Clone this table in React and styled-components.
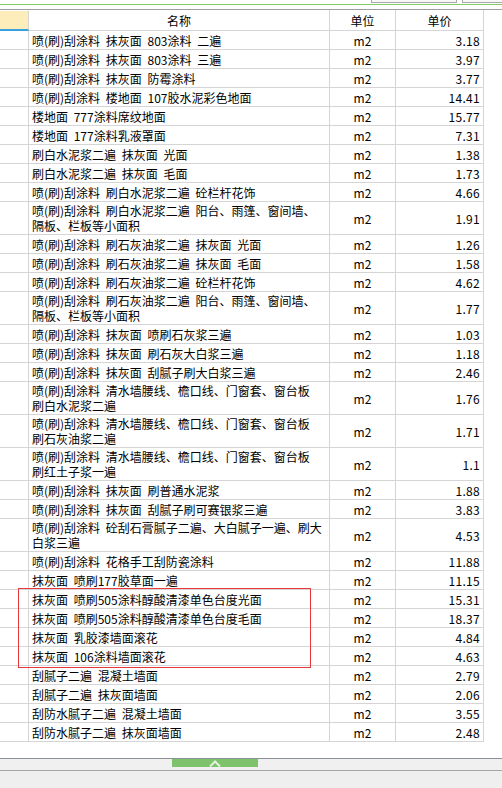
import styled, { createGlobalStyle } from "styled-components";

const GlobalStyle = createGlobalStyle`
  html, body {
    margin: 0;
    padding: 0;
    background: #ffffff;
  }
  body {
    font-family: "Noto Sans CJK SC", "Liberation Sans", sans-serif;
    font-size: 12px;
    color: #000000;
  }
`;

const Page = styled.div`
  height: 788px;
  display: flex;
  flex-direction: column;
  overflow: hidden;
`;

const TopBar = styled.div`
  height: 4px;
  display: flex;
  justify-content: flex-end;
  align-items: flex-start;
  overflow: hidden;
  border-bottom: 1px solid #82cc66;
`;

const TabStub = styled.div`
  width: ${(p) => p.$width}px;
  height: 2px;
  margin-left: 5px;
  margin-right: ${(p) => p.$trailing || 0}px;
  background: #f7f7f7;
  border: 1px solid #a9a9a9;
  border-top: none;
  flex-shrink: 0;
`;

const Spacer = styled.div`
  height: 4px;
  border-bottom: 1px solid #9e9e9e;
`;

const TableArea = styled.div`
  flex: 1;
  background: #ffffff;
`;

const Row = styled.div`
  display: grid;
  grid-template-columns: 29px 301px 66px 88px;
  height: ${(p) => (p.$tall ? 33 : 19)}px;
`;

const HeaderRow = styled(Row)`
  height: 21px;
`;

const Cell = styled.div`
  box-sizing: border-box;
  border-right: 1px solid #d5d5d5;
  border-bottom: 1px solid #d5d5d5;
  display: flex;
  align-items: center;
  overflow: hidden;
  white-space: nowrap;
`;

const CornerCell = styled(Cell)`
  background: #fdedbb;
  border-bottom: 2px solid #38a0dc;
  border-top: 1px solid #ffffff;
`;

const HeaderCell = styled(Cell)`
  justify-content: center;
  line-height: 20px;
  padding-top: 1px;
`;

const IndexCell = styled(Cell)``;

const NameCell = styled(Cell)`
  flex-direction: column;
  align-items: flex-start;
  justify-content: center;
  padding-left: 3px;
  padding-top: ${(p) => (p.$multi ? 0 : 1)}px;
  word-spacing: 3px;
`;

const NameLine = styled.span`
  display: block;
  line-height: ${(p) => (p.$multi ? 15 : 18)}px;
`;

const UnitCell = styled(Cell)`
  justify-content: center;
  padding-top: 1px;
`;

const PriceCell = styled(Cell)`
  justify-content: flex-end;
  padding-right: 3px;
  padding-top: 1px;
  font-variant-numeric: tabular-nums;
  letter-spacing: 0.3px;
`;

const Highlight = styled.div`
  position: relative;

  &::after {
    content: "";
    position: absolute;
    left: 18px;
    top: -2px;
    bottom: -2px;
    width: 293px;
    border: 1px solid #e8383c;
    box-sizing: border-box;
    pointer-events: none;
  }
`;

const ScrollBar = styled.div`
  height: 11px;
  border-top: 1px solid #8c9197;
  border-bottom: 1px solid #a4a4a4;
  background: #f0f0f0;
  padding-left: 172px;
`;

const Thumb = styled.div`
  width: 86px;
  height: 8px;
  background: #7ec36b;
  display: flex;
  justify-content: center;
  align-items: flex-end;
`;

const Footer = styled.div`
  height: 17px;
  background: #efefef;
`;

const rows = [
  { name: ["喷(刷)刮涂料 抹灰面 803涂料 二遍"], price: "3.18" },
  { name: ["喷(刷)刮涂料 抹灰面 803涂料 三遍"], price: "3.97" },
  { name: ["喷(刷)刮涂料 抹灰面 防霉涂料"], price: "3.77" },
  { name: ["喷(刷)刮涂料 楼地面 107胶水泥彩色地面"], price: "14.41" },
  { name: ["楼地面 777涂料席纹地面"], price: "15.77" },
  { name: ["楼地面 177涂料乳液罩面"], price: "7.31" },
  { name: ["刷白水泥浆二遍 抹灰面 光面"], price: "1.38" },
  { name: ["刷白水泥浆二遍 抹灰面 毛面"], price: "1.73" },
  { name: ["喷(刷)刮涂料 刷白水泥浆二遍 砼栏杆花饰"], price: "4.66" },
  { name: ["喷(刷)刮涂料 刷白水泥浆二遍 阳台、雨篷、窗间墙、", "隔板、栏板等小面积"], price: "1.91" },
  { name: ["喷(刷)刮涂料 刷石灰油浆二遍 抹灰面 光面"], price: "1.26" },
  { name: ["喷(刷)刮涂料 刷石灰油浆二遍 抹灰面 毛面"], price: "1.58" },
  { name: ["喷(刷)刮涂料 刷石灰油浆二遍 砼栏杆花饰"], price: "4.62" },
  { name: ["喷(刷)刮涂料 刷石灰油浆二遍 阳台、雨篷、窗间墙、", "隔板、栏板等小面积"], price: "1.77" },
  { name: ["喷(刷)刮涂料 抹灰面 喷刷石灰浆三遍"], price: "1.03" },
  { name: ["喷(刷)刮涂料 抹灰面 刷石灰大白浆三遍"], price: "1.18" },
  { name: ["喷(刷)刮涂料 抹灰面 刮腻子刷大白浆三遍"], price: "2.46" },
  { name: ["喷(刷)刮涂料 清水墙腰线、檐口线、门窗套、窗台板", "刷白水泥浆二遍"], price: "1.76" },
  { name: ["喷(刷)刮涂料 清水墙腰线、檐口线、门窗套、窗台板", "刷石灰油浆二遍"], price: "1.71" },
  { name: ["喷(刷)刮涂料 清水墙腰线、檐口线、门窗套、窗台板", "刷红土子浆一遍"], price: "1.1" },
  { name: ["喷(刷)刮涂料 抹灰面 刷普通水泥浆"], price: "1.88" },
  { name: ["喷(刷)刮涂料 抹灰面 刮腻子刷可赛银浆三遍"], price: "3.83" },
  { name: ["喷(刷)刮涂料 砼刮石膏腻子二遍、大白腻子一遍、刷大", "白浆三遍"], price: "4.53" },
  { name: ["喷(刷)刮涂料 花格手工刮防瓷涂料"], price: "11.88" },
  { name: ["抹灰面 喷刷177胶草面一遍"], price: "11.15" },
  { name: ["抹灰面 喷刷505涂料醇酸清漆单色台度光面"], price: "15.31" },
  { name: ["抹灰面 喷刷505涂料醇酸清漆单色台度毛面"], price: "18.37" },
  { name: ["抹灰面 乳胶漆墙面滚花"], price: "4.84" },
  { name: ["抹灰面 106涂料墙面滚花"], price: "4.63" },
  { name: ["刮腻子二遍 混凝土墙面"], price: "2.79" },
  { name: ["刮腻子二遍 抹灰面墙面"], price: "2.06" },
  { name: ["刮防水腻子二遍 混凝土墙面"], price: "3.55" },
  { name: ["刮防水腻子二遍 抹灰面墙面"], price: "2.48" },
];

const ItemRow = ({ item }) => {
  const multi = item.name.length > 1;
  return (
    <Row $tall={multi}>
      <IndexCell />
      <NameCell $multi={multi}>
        {item.name.map((line, i) => (
          <NameLine key={i} $multi={multi}>
            {line}
          </NameLine>
        ))}
      </NameCell>
      <UnitCell>m2</UnitCell>
      <PriceCell>{item.price}</PriceCell>
    </Row>
  );
};

const App = () => {
  return (
    <>
      <GlobalStyle />
      <Page>
        <TopBar>
          <TabStub $width={84} />
          <TabStub $width={40} $trailing={-2} />
        </TopBar>
        <Spacer />
        <TableArea>
          <HeaderRow>
            <CornerCell />
            <HeaderCell>名称</HeaderCell>
            <HeaderCell>单位</HeaderCell>
            <HeaderCell>单价</HeaderCell>
          </HeaderRow>
          {rows.slice(0, 25).map((item, i) => (
            <ItemRow key={i} item={item} />
          ))}
          <Highlight>
            {rows.slice(25, 29).map((item, i) => (
              <ItemRow key={i} item={item} />
            ))}
          </Highlight>
          {rows.slice(29).map((item, i) => (
            <ItemRow key={i} item={item} />
          ))}
        </TableArea>
        <ScrollBar>
          <Thumb>
            <svg width="12" height="7" viewBox="0 0 12 7">
              <polyline
                points="1,6.5 6,1.5 11,6.5"
                fill="none"
                stroke="#e4f3de"
                strokeWidth="2"
              />
            </svg>
          </Thumb>
        </ScrollBar>
        <Footer />
      </Page>
    </>
  );
};

export default App;
